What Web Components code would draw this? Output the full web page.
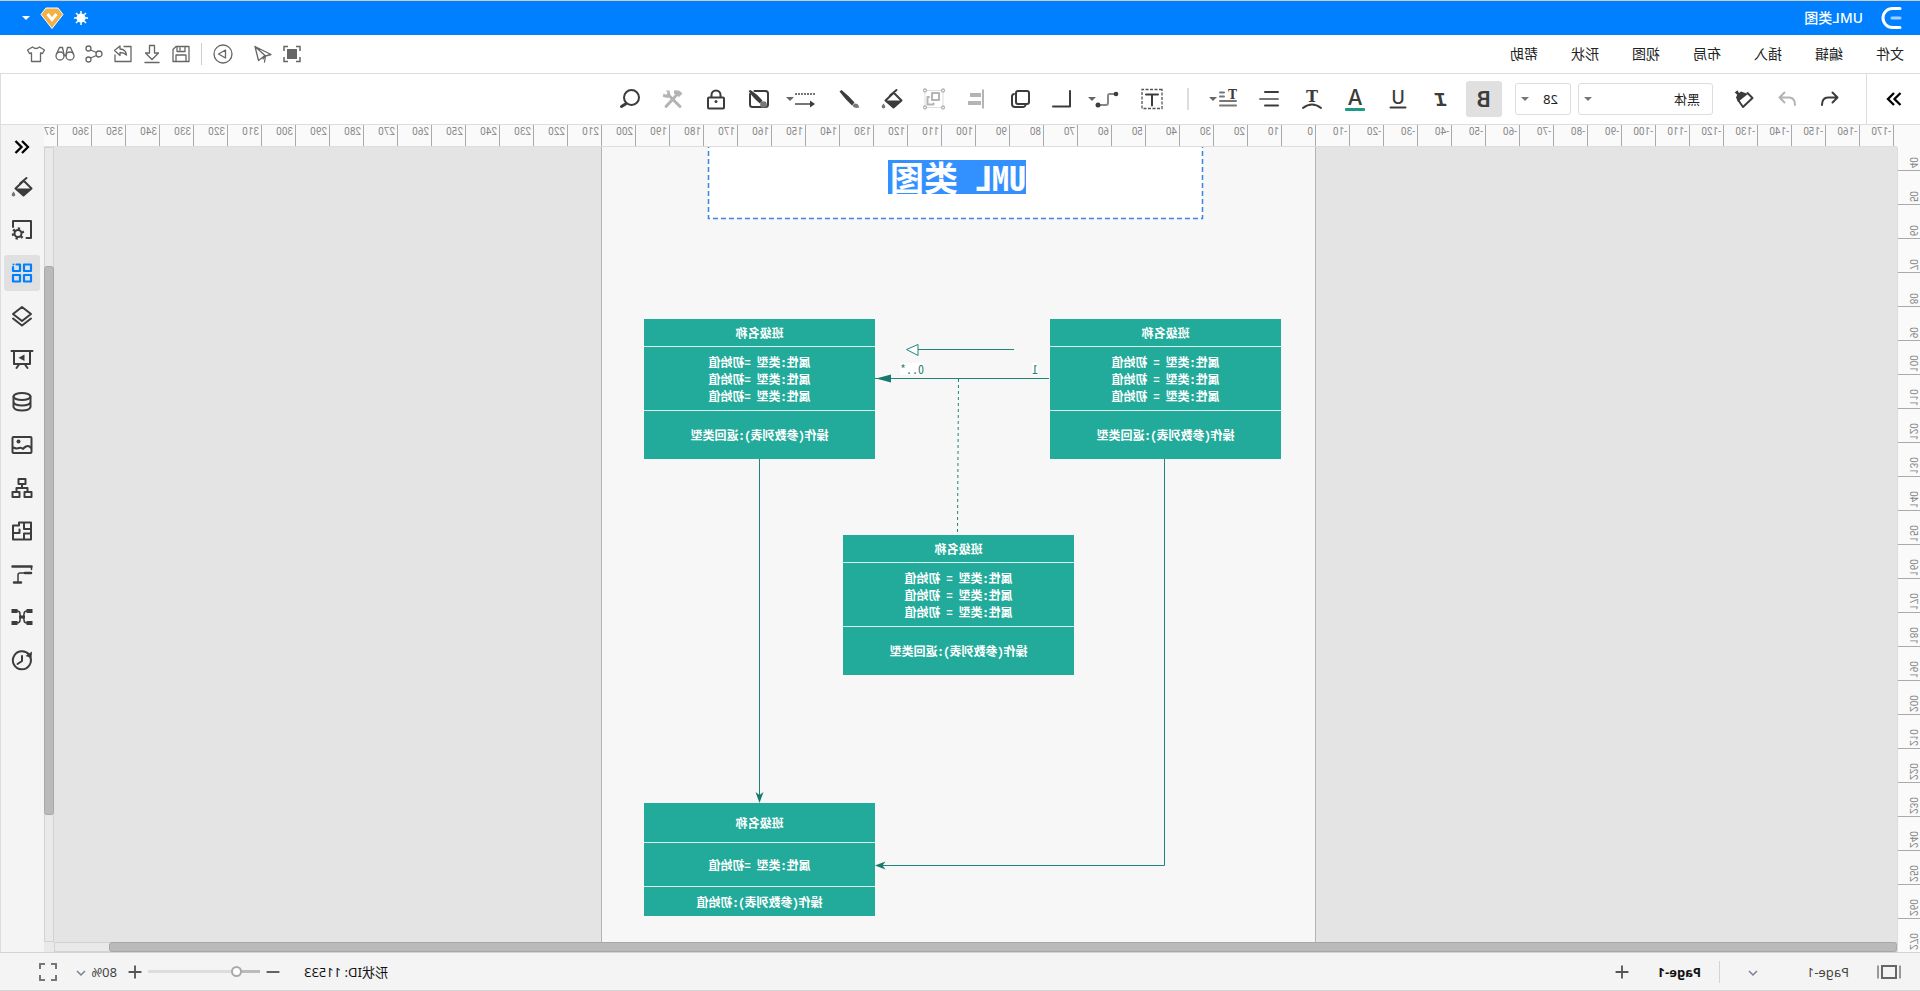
<!DOCTYPE html>
<html lang="zh-CN">
<head>
<meta charset="utf-8">
<title>UML类图</title>
<style>
html, body { margin: 0; height: 100%; overflow: hidden; }
body { font-family: "Noto Sans", "Noto Sans CJK SC", sans-serif; font-size: 14px; color: #222; }
</style>
</head>
<body>
<uml-app></uml-app>
<script>
function define(name, html, setup) {
  const template = document.createElement('template');
  template.innerHTML = html;
  customElements.define(name, class extends HTMLElement {
    connectedCallback() {
      if (this.shadowRoot) return;
      this.attachShadow({ mode: 'open' }).appendChild(template.content.cloneNode(true));
      if (setup) setup(this, this.shadowRoot);
    }
  });
}

/* Icon drawings on a 24 unit grid; currentColor unless stated. */
const S = 'fill="none" stroke="currentColor" stroke-linecap="round" stroke-linejoin="round"';
const bucket = `<g ${S} stroke-width="2"><path d="M10 6 2.500 13.500 10.500 20.500 18.500 13.500 10 5.500M14 8.500 7.500 3"/></g><path fill="currentColor" d="M3 13.500H18L10.500 21Z"/><path fill="#777" d="M20.500 16.500c1 1.500 1.800 2.300 1.800 3.200a1.800 1.800 0 0 1-3.600 0c0-.9.800-1.700 1.800-3.200z"/>`;
const ICONS = {
  back: `<path ${S} stroke-width="2" d="M20 18C20 12.500 17.500 10.500 14 10.500H5M9.500 5.500l-5 5 5 5"/>`,
  forward: `<path ${S} stroke-width="2" d="M4 18C4 12.500 6.500 10.500 10 10.500h9M14.500 5.500l5 5-5 5"/>`,
  painter: `<path ${S} stroke-width="2" d="M8.500 6 3.500 11 13 20l4.500-6.500"/><path fill="currentColor" d="M8 7 15 4.500 17 6 18.500 3.300 21.300 5.500 18.800 7.800 20 10.500 18 15 12.500 10.500Z"/>`,
  bold: `<text x="5" y="20" font-family="Noto Sans" font-weight="600" font-size="22">B</text>`,
  italic: `<text x="6" y="19" font-family="Liberation Mono" font-weight="700" font-style="italic" font-size="21">I</text>`,
  underline: `<text x="12" y="17" text-anchor="middle" font-family="Inter" font-weight="500" font-size="18">U</text><path ${S} stroke-width="2" d="M4.500 20.500h15"/>`,
  color: `<text x="12" y="18" text-anchor="middle" font-family="Inter" font-weight="500" font-size="21">A</text><rect x="2" y="21" width="20" height="3" rx="1" fill="#1b9a88"/>`,
  arc: `<text x="12" y="15" text-anchor="middle" font-family="DejaVu Serif" font-weight="700" font-size="16">T</text><path ${S} stroke-width="2" d="M3 21q9-7 18 0"/>`,
  align: `<g ${S} stroke-width="2"><path d="M3 5h13M3 18.500h13"/><path stroke="#777" d="M3 12h18"/></g>`,
  para: `<text x="3" y="12" font-family="DejaVu Serif" font-weight="700" font-size="12">T</text><g ${S} stroke-width="2"><path stroke="#777" d="M16 5.500h4M16 9.500h4M4 14h16M4 18.500h16"/></g>`,
  textbox: `<rect x="2" y="2.500" width="20" height="19" fill="none" stroke="#555" stroke-width="1.300" stroke-dasharray="3 1.500"/><path ${S} stroke-width="2" d="M6 7.500h12M12 7.500v11"/>`,
  connector: `<path fill="none" stroke="#888" stroke-width="2" d="M4 7H9.500Q11 7 11 9V15.500Q11 18 13 18H20"/><circle cx="3" cy="7" r="2.300" fill="currentColor"/><circle cx="21" cy="18" r="2.500" fill="currentColor"/>`,
  corner: `<path ${S} stroke-width="2" d="M4 4V19.500H21"/>`,
  layers: `<g ${S} stroke-width="2"><rect x="3" y="4" width="13" height="13" rx="2"/><path d="M6.500 18v0q.5 2 2 2H17q3 0 3-3V9.500q0-2-2-2.500"/></g>`,
  objalign: `<path d="M4 2.500h2v19H4zM7 6h11v4H7zM7 14h13v4H7z" fill="currentColor"/>`,
  group: `<rect x="3" y="3.500" width="18" height="17" fill="none" stroke="#ddd"/><g fill="#fff" stroke="currentColor" stroke-width="1.300"><circle cx="3" cy="3.500" r="1.500"/><circle cx="21" cy="3.500" r="1.500"/><circle cx="3" cy="20.500" r="1.500"/><circle cx="21" cy="20.500" r="1.500"/></g><path ${S} stroke-width="2" d="M7 6h7v7H7zM12.500 16.500v1h6v-7.500h-1.500"/>`,
  bucket,
  brush: `<path fill="currentColor" d="M22.500 4.500 20.500 3Q14 8 7.500 15.500L10 18.500Q17 12 22.500 4.500Z"/><path fill="#777" d="M7.500 16.500q-3-.5-4 2-.5 1.500-1 2 6 1.500 7-2z"/>`,
  line: `<path fill="none" stroke="#777" stroke-width="2" stroke-dasharray="2 1" d="M2 7h20"/><path fill="none" stroke="#777" stroke-width="2" d="M7 17h15"/><path fill="currentColor" d="M7 13.500v7L2 17Z"/>`,
  nostyle: `<path ${S} stroke-width="2" d="M16.500 4H5.500Q3 4 3 6.500V17.500Q3 20 5.500 20H18.500Q21 20 21 17.500V7"/><path fill="currentColor" d="M22.500 4 20.500 3Q14 7 8.500 13.500L11 16.500Q17 12 22.500 4Z"/><circle cx="7.500" cy="17.500" r="3.300" fill="#777"/>`,
  lock: `<g ${S} stroke-width="2"><rect x="4" y="10.500" width="16" height="11" rx="1"/><path d="M7.500 10V8a4.500 4.500 0 0 1 9 0v2"/></g><circle cx="12" cy="14.500" r="1.500" fill="currentColor"/>`,
  tools: `<path ${S} stroke-width="3" d="M7 6.500 19 19.500M5 19.500 17 7.500"/><path fill="currentColor" d="M11 3.500Q6 2 2.500 6.500L6 10 11 6.500ZM15.500 3.500l-1 5 2.500 2.500 5-1q0-2.500-.5-3.500L18.500 8 17 6.500l2-3Z"/>`,
  search: `<g ${S} stroke-width="2"><circle cx="10.500" cy="10.500" r="7.500"/><path stroke-width="3" d="M16.500 17 20.500 19.500"/></g>`,
  gear: `<path ${S} stroke-width="2" d="M7.500 20H3V3H21V9"/><circle cx="16" cy="15.500" r="3.500" fill="none" stroke="currentColor" stroke-width="2"/><circle cx="16" cy="15.500" r="5" fill="none" stroke="currentColor" stroke-width="2.500" stroke-dasharray="2.200 3.036"/>`,
  grid: `<g ${S} stroke-width="2.200"><rect x="3" y="3.500" width="7" height="6.500"/><path d="M14 3.500h3.500M21 6v4H14V3.500"/><rect x="3" y="14" width="7" height="6.500"/><rect x="14" y="14" width="7" height="6.500"/></g><circle cx="20.500" cy="3.500" r="1" fill="currentColor"/>`,
  stack: `<path ${S} stroke-width="2" d="M12 3 3 10l9 7 9-7ZM3 14.500l9 7 9-7"/>`,
  board: `<path ${S} stroke-width="2" d="M1.500 4h21M4 4V17H20V4M9 17.500 6.500 21M15 17.500 17.500 21"/><path fill="currentColor" d="M9.500 7.500v6.500l6-3.200Z"/>`,
  data: `<g ${S} stroke-width="2"><ellipse cx="12" cy="6.500" rx="8.500" ry="3.500"/><path d="M3.500 6.500V17q1 3.500 8.500 3.500T20.500 17V6.500M3.500 12q1 3.500 8.500 3.500T20.500 12"/></g>`,
  image: `<rect x="2.500" y="4" width="19" height="16" rx="1" ${S} stroke-width="2"/><circle cx="15.500" cy="8.500" r="2" fill="currentColor"/><path ${S} stroke-width="2" d="M3 15q2-3 5-1.500 2 1 3 2.500 1.500-2 4-1t6-.5"/>`,
  org: `<path ${S} stroke-width="2" d="M8.500 3h7v5h-7zM12 8v4M6.500 15V12H17.500V15M2.500 16h7v5h-7zM14.500 16h7v5h-7z"/>`,
  plan: `<path ${S} stroke-width="2" d="M3 3.500H15V6.500H21V20.500H3ZM10 3.500V10H3M10 20.500V14.500H3M14.500 10.500V14H21"/>`,
  format: `<path ${S} stroke-width="2.500" d="M2.500 4.500h19M3 11h6M13 20.500h7"/><path ${S} stroke-width="1.500" d="M8 11h6q2 0 2 2v7M2.500 4.500v3"/>`,
  mesh: `<path ${S} stroke-width="1.500" d="M7 6q3 0 3 3t2 3 2-3 3-3M7 18q3 0 3-3t2-3 2 3 3 3"/><path fill="currentColor" d="M1.500 4h6v4h-6zM16.500 4h6v4h-6zM1.500 16h6v4h-6zM16.500 16h6v4h-6zM9 10.500h6v3h-6z"/>`,
  history: `<path ${S} stroke-width="2" d="M4 8.500A9 9 0 1 0 20 8 9 9 0 0 0 5 6.500M12 8v5l4.500 3"/><path fill="currentColor" d="M2 3.500 2.500 10 8.500 8Z"/>`,
  present: `<g fill="none" stroke="#666" stroke-width="1.500"><path d="M4 9V4.500h4M16 4.500h4V9M4 15v4.500h4M16 19.500h4V15"/></g><rect x="7" y="7" width="10" height="10" fill="#666"/>`,
  send: `<path ${S} stroke-width="1.300" d="M20 4.500 4 12.500 9.500 14 10.500 20M20 4.500 16.500 18.500 10 13.500ZM10 13.500 12 17"/>`,
  play: `<circle cx="12" cy="12" r="9" ${S} stroke-width="1.300"/><path ${S} stroke-width="1.300" d="M9.500 8v8l7-4Z"/>`,
  save: `<path ${S} stroke-width="1.300" d="M4 4.500H17L20 7.500V19.500H4ZM8 4.500V9.500h8V4.500M7 19.500V13h10v6.500M13 6v2"/>`,
  download: `<path ${S} stroke-width="1.300" d="M9.500 3.500h5V11H18.500L12 17.500 5.500 11H9.500Z"/><path ${S} stroke-width="1.500" d="M5 20.500h14"/>`,
  share2: `<path ${S} stroke-width="1.300" d="M11 4.500H4V19.500H20V13M20.500 8.500 15 4V7Q9 7.500 8.500 13 11 10.500 15 10.500V13.500Z"/>`,
  nodes: `<g ${S} stroke-width="1.300"><circle cx="7" cy="12" r="3"/><circle cx="17.500" cy="6.500" r="2.500"/><circle cx="17.500" cy="17.500" r="2.500"/><path d="M9.500 10.500 15.500 8M9.500 13.500 15.500 16"/></g>`,
  binoculars: `<g ${S} stroke-width="1.300"><circle cx="7" cy="14" r="4"/><circle cx="17" cy="14" r="4"/><path d="M3.500 12 6.500 5.500h3l1.500 7M20.500 12 17.500 5.500h-3L13 12.500M11 13.500h2"/></g>`,
  shirt: `<path ${S} stroke-width="1.300" d="M8.500 5q3.500 3 7 0L20.500 8 18.500 11.500 16.500 11V19.500H7.500V11L5.500 11.500 3.500 8Z"/>`,
  chevrons: `<path fill="none" stroke="#000" stroke-width="2.300" d="M5.500 6l6 6-6 6M12 6l6 6-6 6"/>`,
  chevronsleft: `<path fill="none" stroke="#000" stroke-width="2.300" d="M18.500 6l-6 6 6 6M12 6l-6 6 6 6"/>`,
  down: `<path fill="none" stroke="currentColor" stroke-width="1.500" d="M8 10l4 4 4-4"/>`,
  plus: `<path fill="none" stroke="#555" stroke-width="2" d="M5 12h14M12 5v14"/>`,
  minus: `<path fill="none" stroke="#555" stroke-width="2" d="M5 12h14"/>`,
  pages: `<path fill="none" stroke="#999" stroke-width="2" d="M1 5.500v13M23 5.500v13"/><rect x="5" y="6" width="14" height="12" fill="none" stroke="#666" stroke-width="2"/>`,
  full: `<path fill="none" stroke="#777" stroke-width="2" d="M4 9V4h5M15 4h5v5M4 15v5h5M15 20h5v-5"/>`,
  sun: `<circle cx="12" cy="12" r="4.500" fill="#fff"/><path stroke="#fff" stroke-width="1.500" d="M12 5v3M12 16v3M5 12h3M16 12h3M7 7l2 2M15 15l2 2M17 7l-2 2M9 15l-2 2"/>`,
  gem: `<path fill="#f4b042" stroke="#fff" stroke-width="1" stroke-linejoin="round" d="M6 2H18L23 8.500 12 22.500 1 8.500Z"/><path fill="none" stroke="#fff" stroke-width="3" d="M7.500 8 12 13.500 16.500 8"/>`,
  drop: `<path fill="currentColor" d="M8 10h8l-4 4Z"/>`,
  logo: `<path fill="none" stroke="#fff" stroke-width="3" stroke-linecap="round" d="M4 2.500H11.500A9.500 9.500 0 0 1 11.500 21.500H4"/><path stroke="#9fd0ff" stroke-width="3" stroke-linecap="round" d="M4 12h8"/>`
};

define('ui-icon', `<style>
:host { display: block; width: 24px; height: 24px; flex: none; }
svg { display: block; width: 100%; height: 100%; overflow: visible; }
text { fill: currentColor; }
</style><svg viewBox="0 0 24 24" aria-hidden="true"></svg>`,
  (el, root) => { root.querySelector('svg').innerHTML = ICONS[el.getAttribute('name')] || ''; });

define('tool-button', `<style>
:host { display: block; flex: none; width: 36px; height: 36px; color: #3c3c3c; }
:host([drop]) { width: 42px; }
:host([small]) { width: 29px; color: #666; }
:host([dim]) { color: #b4b4b4; }
button { position: relative; display: flex; align-items: center; justify-content: center; width: 100%; height: 100%; padding: 0; border: 0; border-radius: 3px; background: none; color: inherit; }
:host([active]) button { background: #e0e0e0; }
:host([blue]) { color: #0080ff; }
.caret { display: none; position: absolute; right: -6px; top: 6px; color: #666; }
:host([drop]) .caret { display: block; }
</style><button type="button"><ui-icon class="caret" name="drop"></ui-icon></button>`,
  (el, root) => {
    const icon = document.createElement('ui-icon');
    icon.setAttribute('name', el.getAttribute('icon'));
    const button = root.querySelector('button');
    button.prepend(icon);
    button.setAttribute('aria-label', el.getAttribute('icon'));
  });

define('title-bar', `<style>
:host { display: flex; align-items: center; height: 34px; padding: 0 14px 0 16px; border-top: 1px solid #ccc; background: #0080ff; color: #fff; }
h1 { flex: 1; margin: 0 0 0 17px; font-size: 14px; font-weight: 500; line-height: 20px; }
.gem { margin: 0 2px 0 5px; }
</style>
<ui-icon name="logo"></ui-icon><h1>UML类图</h1>
<ui-icon name="sun"></ui-icon><ui-icon class="gem" name="gem"></ui-icon><ui-icon name="drop"></ui-icon>`);

define('menu-bar', `<style>
:host { display: flex; align-items: center; height: 38px; padding: 0 22px 0 16px; border-bottom: 1px solid #ddd; background: #fff; }
nav { display: flex; flex: 1; gap: 33px; }
a { color: #222; text-decoration: none; line-height: 20px; }
.play { margin: 0 7px 0 11px; }
.rule { width: 1px; height: 22px; margin-right: 5px; background: #ccc; }
</style>
<nav><a href="#file">文件</a><a href="#edit">编辑</a><a href="#insert">插入</a><a href="#layout">布局</a><a href="#view">视图</a><a href="#shape">形状</a><a href="#help">帮助</a></nav>
<tool-button small icon="present"></tool-button><tool-button small icon="send"></tool-button>
<tool-button class="play" small icon="play"></tool-button><span class="rule"></span>
<tool-button small icon="save"></tool-button><tool-button small icon="download"></tool-button><tool-button small icon="share2"></tool-button><tool-button small icon="nodes"></tool-button><tool-button small icon="binoculars"></tool-button><tool-button small icon="shirt"></tool-button>`);

define('drop-select', `<style>
:host { position: relative; display: block; flex: none; }
select { width: 100%; height: 32px; padding: 0 12px; appearance: none; border: 1px solid #ddd; border-radius: 3px; background: #fff; color: #222; font: 13px/20px "Noto Sans", "Noto Sans CJK SC", sans-serif; }
:host([plain]) select { height: 24px; padding: 0; border: 0; background: none; color: #444; }
ui-icon { position: absolute; right: -2px; top: 4px; color: #777; pointer-events: none; }
:host([plain]) ui-icon { top: 1px; color: #7a7f99; }
</style><select></select>`,
  (el, root) => {
    const select = root.querySelector('select');
    select.add(new Option(el.getAttribute('value')));
    select.setAttribute('aria-label', el.getAttribute('label'));
    const icon = document.createElement('ui-icon');
    icon.setAttribute('name', el.hasAttribute('plain') ? 'down' : 'drop');
    root.append(icon);
  });

define('tool-bar', `<style>
:host { display: flex; align-items: center; height: 50px; border-bottom: 1px solid #ddd; border-right: 1px solid #ddd; background: #fff; }
.fold { display: flex; align-items: center; align-self: stretch; justify-content: center; width: 53px; margin-right: 18px; border-right: 1px solid #ddd; }
.fold tool-button { margin-right: 1px; }
.set { display: flex; gap: 6px; }
.wide { gap: 7px; }
.font { width: 135px; margin: 0 7px 0 13px; }
.size { width: 56px; margin-right: 13px; }
.para { margin-left: 2px; }
.rule { width: 2px; height: 22px; margin: 0 17px 0 18px; background: #ddd; }
.objects { margin: 0 7px 0 8px; }
</style>
<div class="fold"><tool-button icon="chevrons"></tool-button></div>
<div class="set wide"><tool-button icon="back"></tool-button><tool-button dim icon="forward"></tool-button><tool-button icon="painter"></tool-button></div>
<drop-select class="font" value="黑体" label="字体"></drop-select><drop-select class="size" value="28" label="字号"></drop-select>
<div class="set wide"><tool-button active icon="bold"></tool-button><tool-button icon="italic"></tool-button><tool-button icon="underline"></tool-button><tool-button icon="color"></tool-button><tool-button icon="arc"></tool-button><tool-button icon="align"></tool-button></div>
<tool-button class="para" drop icon="para"></tool-button><span class="rule"></span>
<div class="set"><tool-button icon="textbox"></tool-button><tool-button drop icon="connector"></tool-button><tool-button icon="corner"></tool-button><tool-button icon="layers"></tool-button></div>
<div class="set objects"><tool-button dim icon="objalign"></tool-button><tool-button dim icon="group"></tool-button><tool-button icon="bucket"></tool-button><tool-button icon="brush"></tool-button><tool-button drop icon="line"></tool-button></div>
<div class="set wide"><tool-button icon="nostyle"></tool-button><tool-button icon="lock"></tool-button><tool-button dim icon="tools"></tool-button><tool-button icon="search"></tool-button></div>`);

define('ruler-x', `<style>
:host { display: flex; height: 21px; padding-left: 3px; overflow: hidden; border-bottom: 1px solid #ddd; background: #fafafa; }
span { flex: none; box-sizing: border-box; width: 34px; padding: 1px 2px; border-left: 1px solid #aaa; color: #888; font: 10px/12px Roboto, sans-serif; }
</style>`,
  (el, root) => {
    for (let mm = -170; mm <= 370; mm += 10) {
      const cell = document.createElement('span');
      cell.textContent = mm;
      root.append(cell);
    }
  });

define('ruler-y', `<style>
:host { display: flex; flex-direction: column; overflow: hidden; border-right: 1px solid #ddd; background: #fafafa; }
span { display: block; flex: none; box-sizing: border-box; width: 22px; height: 34px; padding: 2px 9px 2px 1px; border-bottom: 1px solid #aaa; color: #888; font: 10px/12px Roboto, sans-serif; writing-mode: sideways-lr; }
span:first-of-type { height: 24px; }
</style>`,
  (el, root) => {
    for (let mm = 40; mm <= 270; mm += 10) {
      const cell = document.createElement('span');
      cell.textContent = mm;
      root.append(cell);
    }
  });

define('class-node', `<style>
:host { position: absolute; display: grid; width: 231px; grid-template-rows: 27px 63px 48px; gap: 1px; background: #d9f2ee; color: #fff; font: 600 12px/17px "Noto Sans CJK SC", sans-serif; font-feature-settings: "hwid" 1; text-align: center; white-space: pre; }
:host([short]) { grid-template-rows: 39px 43px 29px; }
div { display: flex; flex-direction: column; justify-content: center; padding-bottom: 1px; background: #22ab9b; }
</style><div><slot name="name"></slot></div><div><slot></slot></div><div><slot name="op"></slot></div>`);

define('diagram-sheet', `<style>
:host { position: relative; display: block; box-sizing: border-box; width: 715px; height: 100%; margin-left: 581px; overflow: hidden; border: solid #b4b4b4; border-width: 0 1px; background: #f7f7f7; }
svg { position: absolute; inset: 0; width: 100%; height: 100%; }
h2 { position: absolute; left: 289px; top: 13px; margin: 0; height: 34px; padding-right: 2px; background: #3390ff; color: #fff; font: 700 34px/34px "Noto Sans CJK SC", sans-serif; font-feature-settings: "hwid" 1; white-space: pre; }
.mark { position: absolute; background: #fff; color: #2b7f74; font: 12px/12px "Noto Sans CJK SC", sans-serif; font-feature-settings: "hwid" 1; }
p { margin: 0; }
</style>
<svg aria-hidden="true">
<path d="M112.500 -20V71.500H606.500V-20" fill="#fff" stroke="#3a86dc" stroke-width="1.500" stroke-dasharray="5 3"/>
<g fill="none" stroke="#1f8577" stroke-width="1">
<path d="M301 202.500H397"/><path d="M397 197.500V208.500L408.500 202.500Z" fill="#fff"/>
<path d="M266 231.500H440"/><path d="M356.500 232 357.500 387" stroke-dasharray="3 3"/>
<path d="M555.500 312V652"/><path d="M150.500 312V718.500H436"/></g>
<g fill="#177a6c"><path d="M424 227.500V235.500L439 231.500Z"/><path d="M555.500 656 551.500 645 555.500 648 559.500 645Z"/><path d="M440 718.500 429.500 714.500 432.500 718.500 429.500 722.500Z"/></g>
</svg>
<h2>UML 类图</h2>
<span class="mark" style="left:277px;top:216px">1</span><span class="mark" style="left:391px;top:216px">0..*</span>
<class-node style="left:34px;top:172px"><p slot="name">班级名称</p><p>属性:类型 = 初始值</p><p>属性:类型 = 初始值</p><p>属性:类型 = 初始值</p><p slot="op">操作(参数列表):返回类型</p></class-node>
<class-node style="left:440px;top:172px"><p slot="name">班级名称</p><p>属性:类型 =初始值</p><p>属性:类型 =初始值</p><p>属性:类型 =初始值</p><p slot="op">操作(参数列表):返回类型</p></class-node>
<class-node style="left:241px;top:388px"><p slot="name">班级名称</p><p>属性:类型 = 初始值</p><p>属性:类型 = 初始值</p><p>属性:类型 = 初始值</p><p slot="op">操作(参数列表):返回类型</p></class-node>
<class-node short style="left:440px;top:656px"><p slot="name">班级名称</p><p>属性:类型 =初始值</p><p slot="op">操作(参数列表):初始值</p></class-node>`);

define('scroll-track', `<style>
:host { display: flex; box-sizing: border-box; border: 1px solid #d2d2d2; background: #e9e9e9; }
:host([vertical]) { flex-direction: column; }
i { box-sizing: border-box; border: 1px solid #a8a8a8; border-radius: 3px; background: #bababa; margin: -1px; }
.lead { flex: var(--lead); visibility: hidden; } .thumb { flex: var(--thumb); } .tail { flex: var(--tail); visibility: hidden; }
</style><i class="lead"></i><i class="thumb"></i><i class="tail"></i>`);

define('work-space', `<style>
:host { display: grid; flex: 1; min-width: 0; grid-template: 22px minmax(0, 1fr) 10px / 23px minmax(0, 1fr) 10px; background: #e9e9e9; }
.corner { background: #fafafa; }
ruler-x { grid-column: 2 / 4; }
ruler-y { grid-row: 2 / 4; grid-column: 1; }
.canvas { overflow: hidden; background: #e4e4e4; }
.v { --lead: 15; --thumb: 69; --tail: 16; }
.h { --lead: 0; --thumb: 97; --tail: 3; }
</style>
<div class="corner"></div><ruler-x></ruler-x><ruler-y></ruler-y>
<div class="canvas"><diagram-sheet></diagram-sheet></div>
<scroll-track class="v" vertical></scroll-track><scroll-track class="h"></scroll-track>`);

define('side-bar', `<style>
:host { display: flex; flex-direction: column; align-items: center; gap: 7px; box-sizing: border-box; width: 44px; padding-top: 4px; border-right: 1px solid #ddd; background: #f4f4f4; }
.fold { margin-bottom: -3px; }
</style>
<tool-button class="fold" icon="chevronsleft"></tool-button><tool-button icon="bucket"></tool-button><tool-button icon="gear"></tool-button><tool-button icon="grid" active blue></tool-button><tool-button icon="stack"></tool-button><tool-button icon="board"></tool-button><tool-button icon="data"></tool-button><tool-button icon="image"></tool-button><tool-button icon="org"></tool-button><tool-button icon="plan"></tool-button><tool-button icon="format"></tool-button><tool-button icon="mesh"></tool-button><tool-button icon="history"></tool-button>`);

define('status-bar', `<style>
:host { display: flex; align-items: center; height: 37px; padding: 0 36px 0 19px; border: solid #d4d4d4; border-width: 1px 0; background: #f4f4f4; font-size: 13px; line-height: 20px; }
.page { width: 106px; margin-left: 28px; }
.rule { width: 1px; height: 22px; margin: 0 18px 0 23px; background: #d4d4d4; }
a { color: #111; font-weight: 700; text-decoration: none; }
button { display: block; padding: 0; border: 0; background: none; }
.add { margin-left: 25px; }
.id { margin: 0 20px 0 auto; color: #111; }
button ui-icon { width: 22px; height: 22px; }
input { appearance: none; width: 112px; height: 12px; margin: 0 2px; background: linear-gradient(90deg, #bbb 24px, #ddd 24px) center / 100% 3px no-repeat; }
input::-webkit-slider-thumb { appearance: none; box-sizing: border-box; width: 11px; height: 11px; border: 2px solid #aaa; border-radius: 50%; background: #fff; }
.zoom { width: 46px; margin-left: 7px; }
.full { margin-left: 11px; }
.full ui-icon { width: 24px; height: 24px; }
</style>
<ui-icon name="pages"></ui-icon><drop-select class="page" plain value="Page-1" label="页面"></drop-select><span class="rule"></span>
<a href="#page-1">Page-1</a><button class="add" type="button" aria-label="新增页面"><ui-icon name="plus"></ui-icon></button>
<span class="id">形状ID: 11533</span>
<button type="button" aria-label="缩小"><ui-icon name="minus"></ui-icon></button>
<input type="range" min="0" max="100" value="18" aria-label="缩放">
<button type="button" aria-label="放大"><ui-icon name="plus"></ui-icon></button>
<drop-select class="zoom" plain value="80%" label="缩放比例"></drop-select>
<button class="full" type="button" aria-label="全屏"><ui-icon name="full"></ui-icon></button>`);

/* The whole editor is shown as a horizontal mirror view. */
define('uml-app', `<style>
:host { display: flex; flex-direction: column; height: 100vh; transform: scaleX(-1); background: #fff; }
main { display: flex; flex: 1; min-height: 0; }
</style>
<title-bar></title-bar><menu-bar></menu-bar><tool-bar></tool-bar>
<main><work-space></work-space><side-bar></side-bar></main>
<status-bar></status-bar>`);
</script>
</body>
</html>
